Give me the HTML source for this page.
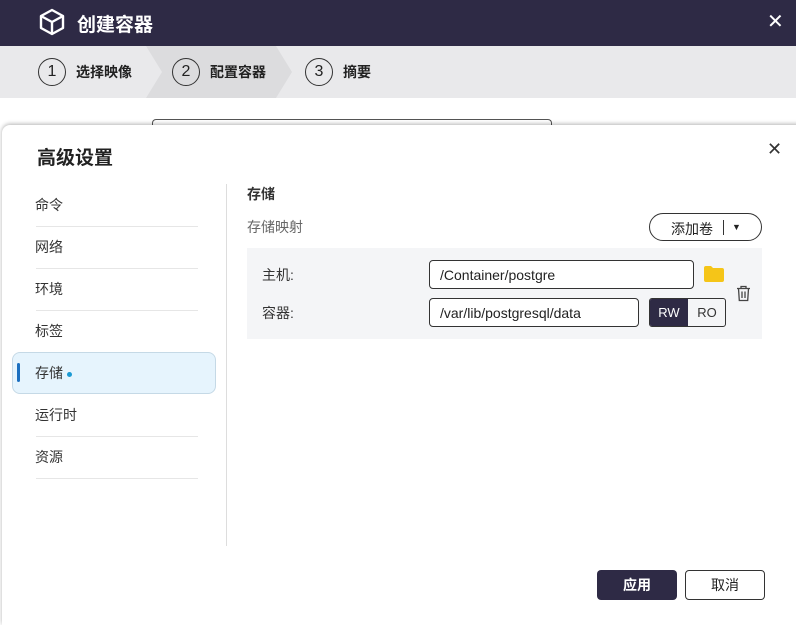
<!DOCTYPE html><html><head><meta charset="utf-8"><style>
*{box-sizing:border-box;margin:0;padding:0}
body{width:796px;height:622px;overflow:hidden;background:#fff;font-family:"Liberation Sans","Noto Sans CJK SC",sans-serif;position:relative;color:#222}
.hdr{position:absolute;left:0;top:0;width:796px;height:46px;background:#2e2a45;color:#fff}
.steps{position:absolute;left:0;top:46px;width:796px;height:52px;background:#e9e9eb}
.step{position:absolute;top:12px;display:flex;align-items:center;font-size:14px;font-weight:bold;color:#222}
.circ{width:28px;height:28px;border:1.5px solid #333;border-radius:50%;display:flex;align-items:center;justify-content:center;font-weight:normal;font-size:16px;margin-right:10px}
.modal{position:absolute;left:2px;top:125px;width:800px;height:500px;background:#fff;border-radius:8px 0 0 0;box-shadow:0 -1px 4px rgba(0,0,0,.3)}
.abs{position:absolute}
.nav{position:absolute;left:35px;font-size:14px;color:#333}
.line{position:absolute;left:36px;width:162px;height:1px;background:#e6e6e6}
.inp{position:absolute;height:29px;border:1px solid #333;border-radius:4px;font-size:14px;padding:6px 10px;color:#222;background:#fff}
</style></head><body>
<div class="hdr">
<svg class="abs" style="left:38px;top:8px" width="28" height="28" viewBox="0 0 28 28" fill="none" stroke="#fff" stroke-width="2.4" stroke-linejoin="round"><path d="M14 2L25 8V20L14 26L3 20V8Z"/><path d="M3 8L14 14L25 8M14 14V26"/></svg>
<div class="abs" style="left:77px;top:10px;font-size:19px;font-weight:bold">创建容器</div>
<div class="abs" style="left:767px;top:9px;font-size:20px">✕</div>
</div>
<div class="steps">
<svg class="abs" style="left:146px;top:0" width="150" height="52"><path d="M0 0H130L146 26L130 52H0L16 26Z" fill="#dcdcde"/></svg>
<div class="step" style="left:38px"><div class="circ">1</div>选择映像</div>
<div class="step" style="left:172px"><div class="circ">2</div>配置容器</div>
<div class="step" style="left:305px"><div class="circ">3</div>摘要</div>
</div>
<div class="abs" style="left:152px;top:119px;width:400px;height:12px;border:1px solid #555;border-bottom:none;border-radius:4px 4px 0 0"></div>
<div class="modal"></div>
<div class="abs" style="left:37px;top:143px;font-size:19px;font-weight:bold">高级设置</div>
<div class="abs" style="left:767px;top:139px;font-size:18px;color:#333">✕</div>
<div class="nav" style="top:195px">命令</div><div class="line" style="top:226px"></div>
<div class="nav" style="top:237px">网络</div><div class="line" style="top:268px"></div>
<div class="nav" style="top:279px">环境</div><div class="line" style="top:310px"></div>
<div class="nav" style="top:321px">标签</div>
<div class="abs" style="left:12px;top:352px;width:204px;height:42px;background:#e6f4fd;border:1px solid #c5d9e6;border-radius:8px"></div>
<div class="abs" style="left:17px;top:363px;width:3px;height:19px;background:#1c6fc0;border-radius:2px"></div>
<div class="nav" style="top:363px">存储 <span style="display:inline-block;width:5px;height:5px;border-radius:50%;background:#1b9ad3;vertical-align:middle"></span></div>
<div class="nav" style="top:405px">运行时</div><div class="line" style="top:436px"></div>
<div class="nav" style="top:447px">资源</div><div class="line" style="top:478px"></div>
<div class="abs" style="left:226px;top:184px;width:1px;height:362px;background:#ddd"></div>
<div class="abs" style="left:247px;top:184px;font-size:14px;font-weight:bold;color:#333">存储</div>
<div class="abs" style="left:247px;top:217px;font-size:14px;color:#666">存储映射</div>
<div class="abs" style="left:649px;top:213px;width:113px;height:28px;border:1px solid #333;border-radius:14px;font-size:14px"><span class="abs" style="left:21px;top:5px">添加卷</span><span class="abs" style="left:73px;top:6px;width:1px;height:15px;background:#333"></span><span class="abs" style="left:82px;top:8px;font-size:9px">▼</span></div>
<div class="abs" style="left:247px;top:248px;width:515px;height:91px;background:#f4f5f7"></div>
<div class="abs" style="left:262px;top:265px;font-size:14px;color:#333">主机:</div>
<div class="abs" style="left:262px;top:303px;font-size:14px;color:#333">容器:</div>
<div class="inp" style="left:429px;top:260px;width:265px">/Container/postgre</div>
<div class="inp" style="left:429px;top:298px;width:210px">/var/lib/postgresql/data</div>
<div class="abs" style="left:649px;top:298px;width:77px;height:29px;border:1px solid #333;border-radius:3px;overflow:hidden;font-size:13px"><span class="abs" style="left:0;top:0;width:38px;height:29px;background:#2e2a45;color:#fff;text-align:center;line-height:27px">RW</span><span class="abs" style="left:38px;top:0;width:38px;text-align:center;line-height:27px;color:#333">RO</span></div>
<svg class="abs" style="left:703px;top:265px" width="22" height="18" viewBox="0 0 22 18"><path d="M1 3Q1 1 3 1H8L10 3H19Q21 3 21 5V15Q21 17 19 17H3Q1 17 1 15Z" fill="#f5c518"/></svg>
<svg class="abs" style="left:736px;top:285px" width="15" height="17" viewBox="0 0 15 17" fill="none" stroke="#444" stroke-width="1.3"><path d="M1 3.5H14M5 3.5V1.5H10V3.5M2.5 3.5L3.3 15.5H11.7L12.5 3.5M6 6.5V13M9 6.5V13"/></svg>
<div class="abs" style="left:597px;top:570px;width:80px;height:30px;background:#2e2a45;border-radius:4px;color:#fff;font-size:14px;font-weight:bold;text-align:center;line-height:30px">应用</div>
<div class="abs" style="left:685px;top:570px;width:80px;height:30px;border:1px solid #333;border-radius:4px;font-size:14px;text-align:center;line-height:28px">取消</div>
</body></html>
